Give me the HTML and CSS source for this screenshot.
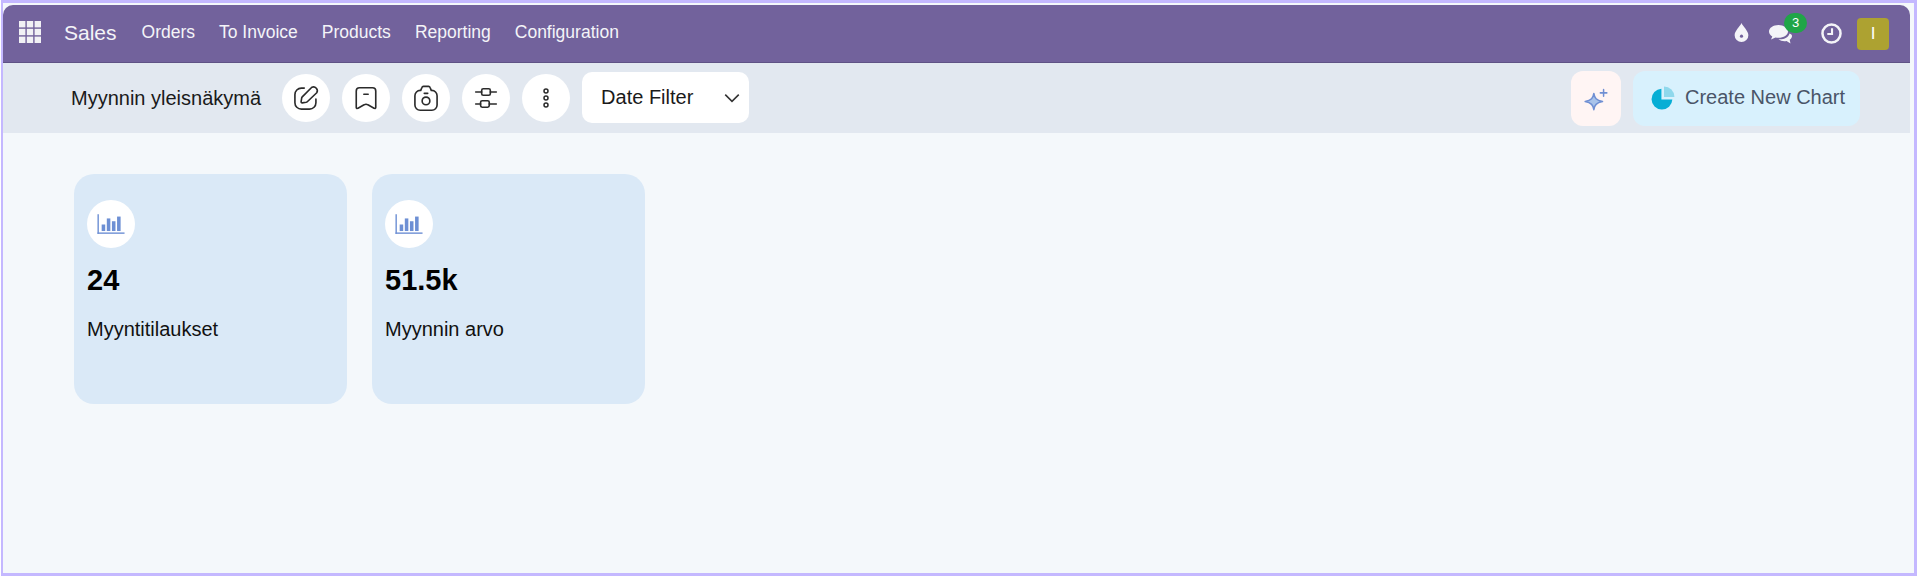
FILE: index.html
```html
<!DOCTYPE html>
<html lang="en">
<head>
  <meta charset="UTF-8">
  <title>Sales</title>
  <link rel="stylesheet" href="styles.css">
</head>
<body>
  <div class="frame">
    <!-- Top menu -->
    <nav class="navbar">
      <svg class="apps-icon" viewBox="0 0 22 22" width="22" height="22" fill="#f1f1f5">
        <rect x="0" y="0" width="6.4" height="6.4"/><rect x="7.8" y="0" width="6.4" height="6.4"/><rect x="15.6" y="0" width="6.4" height="6.4"/>
        <rect x="0" y="7.8" width="6.4" height="6.4"/><rect x="7.8" y="7.8" width="6.4" height="6.4"/><rect x="15.6" y="7.8" width="6.4" height="6.4"/>
        <rect x="0" y="15.6" width="6.4" height="6.4"/><rect x="7.8" y="15.6" width="6.4" height="6.4"/><rect x="15.6" y="15.6" width="6.4" height="6.4"/>
      </svg>
      <span class="brand">Sales</span>
      <a class="nav-link">Orders</a>
      <a class="nav-link">To Invoice</a>
      <a class="nav-link">Products</a>
      <a class="nav-link">Reporting</a>
      <a class="nav-link">Configuration</a>
      <div class="nav-right">
        <svg class="drop-icon" viewBox="0 0 14 18" width="15" height="19">
          <path d="M7 0C5.500 3.500 0.500 7.500 0.500 11.500a6.500 6.500 0 0 0 13 0C13.500 7.500 8.500 3.500 7 0Z" fill="#f4f4f8"/>
          <circle cx="7" cy="12.500" r="1.500" fill="#72629c"/>
        </svg>
        <div class="chat">
          <svg viewBox="0 0 24 20" width="24" height="20" fill="#f4f4f8">
            <path d="M9.500 0C4.300 0 0 2.900 0 6.500c0 2 1.300 3.800 3.300 5L2 14.500l4.500-2.100c1 .3 2 .4 3 .4 5.200 0 9.500-2.800 9.500-6.300S14.700 0 9.500 0Z"/>
            <path d="M20.500 8.500c-1 3.800-5.500 6.300-11 5.800 1.500 1.300 3.800 2 6 2 .7 0 1.400-.1 2-.2l4 2.400-.8-3.700c1.500-1 2.300-2.300 2.300-3.800 0-1-.9-2-2.500-2.500Z"/>
          </svg>
          <span class="badge">3</span>
        </div>
        <svg class="clock-icon" viewBox="0 0 20 20" width="21" height="21" fill="none" stroke="#f4f4f8">
          <circle cx="10" cy="10" r="8.600" stroke-width="2.400"/>
          <path d="M10.500 5v5.500H6" stroke-width="2"/>
        </svg>
        <div class="avatar">I</div>
      </div>
    </nav>

    <!-- Toolbar -->
    <div class="toolbar">
      <span class="page-title">Myynnin yleisnäkymä</span>
      <div class="tool-buttons">
        <button class="round-btn">
          <svg viewBox="0 0 24 24" width="28" height="28" fill="none" stroke="#2b2b2b" stroke-width="1.400" stroke-linecap="round" stroke-linejoin="round">
            <path d="M10.500 3.500H8A5.500 5.500 0 0 0 2.500 9v7A5.500 5.500 0 0 0 8 21.500h7a5.500 5.500 0 0 0 5.500-5.500v-3"/>
            <path d="M17 2.800 8.800 11a2 2 0 0 0-.5 1l-.5 3.300c0 .6.400 1 1 .9l3.300-.5a2 2 0 0 0 1-.5L21.200 7.500a3.300 3.300 0 0 0-4.200-4.700Z"/>
          </svg>
        </button>
        <button class="round-btn">
          <svg viewBox="0 0 24 24" width="26" height="26" fill="none" stroke="#2b2b2b" stroke-width="1.500" stroke-linecap="round" stroke-linejoin="round">
            <path d="M6 2.500h12a3 3 0 0 1 3 3v15.200c0 .9-.9 1.200-1.600.7l-5.600-3.100a3.500 3.500 0 0 0-3.600 0l-5.600 3.100c-.7.500-1.600.2-1.600-.7V5.500a3 3 0 0 1 3-3Z"/>
            <path d="M10 8.500h4"/>
          </svg>
        </button>
        <button class="round-btn">
          <svg viewBox="0 0 24 24" width="28" height="28" fill="none" stroke="#2b2b2b" stroke-width="1.400" stroke-linecap="round" stroke-linejoin="round">
            <path d="M7.500 5.500 8.500 3c.2-.6.700-1 1.300-1h4.400c.6 0 1.100.4 1.300 1l1 2.500h.5a4.500 4.500 0 0 1 4.500 4.500v8a4.500 4.500 0 0 1-4.500 4.500H7A4.500 4.500 0 0 1 2.500 18v-8A4.500 4.500 0 0 1 7 5.500Z"/>
            <circle cx="12" cy="14.500" r="3.300"/>
            <path d="M10.500 8h3"/>
          </svg>
        </button>
        <button class="round-btn">
          <svg viewBox="0 0 24 24" width="26" height="26" fill="none" stroke="#2b2b2b" stroke-width="1.500" stroke-linecap="round" stroke-linejoin="round">
            <rect x="8" y="3.500" width="8" height="6" rx="1.500"/>
            <rect x="7" y="14.500" width="8" height="6" rx="1.500"/>
            <path d="M2.500 6.500H8M16 6.500h5.500M2.500 17.500H7M15 17.500h6.500"/>
          </svg>
        </button>
        <button class="round-btn">
          <svg viewBox="0 0 24 24" width="24" height="24" fill="none" stroke="#2b2b2b" stroke-width="1.500">
            <circle cx="12" cy="5" r="2"/><circle cx="12" cy="12" r="2"/><circle cx="12" cy="19" r="2"/>
          </svg>
        </button>
      </div>
      <div class="date-filter">
        <span>Date Filter</span>
        <svg viewBox="0 0 16 16" width="18" height="18" fill="none" stroke="#333" stroke-width="1.400"><path d="M2 5l6 6 6-6"/></svg>
      </div>
      <div class="toolbar-right">
        <button class="ai-btn">
          <svg viewBox="0 0 24 24" width="26" height="26" stroke="#6f8fd3" stroke-width="1.400" stroke-linejoin="round" stroke-linecap="round">
            <path d="M10 5c.6 4.200 2.300 6.300 8 7.500-5.700 1.200-7.400 3.300-8 7.500-.6-4.200-2.300-6.300-8-7.500C7.700 11.300 9.400 9.200 10 5Z" fill="#a9c3ea"/>
            <path d="M19 1.500v6M16 4.500h6" fill="none"/>
          </svg>
        </button>
        <button class="chart-btn">
          <svg viewBox="0 0 24 24" width="25" height="25">
            <path d="M10 3.500a10 10 0 1 0 10.500 10.500H10Z" fill="#06aed5"/>
            <path d="M12.500 1.500a10 10 0 0 1 10 10h-10Z" fill="#8fd8ec"/>
          </svg>
          <span>Create New Chart</span>
        </button>
      </div>
    </div>

    <!-- Kortit -->
    <main class="content">
      <div class="stat-card">
        <div class="stat-icon">
          <svg viewBox="0 0 30 24" width="28" height="23" fill="#6d8fd4">
            <rect x="0.500" y="1" width="1.500" height="21"/><rect x="0.500" y="20.500" width="29" height="1.500"/>
            <rect x="5" y="12" width="3.800" height="7"/><rect x="10.500" y="5.500" width="3.800" height="13.500"/><rect x="16" y="8.500" width="3.800" height="10.500"/><rect x="21.500" y="3.500" width="3.800" height="15.500"/>
          </svg>
        </div>
        <div class="stat-value">24</div>
        <div class="stat-label">Myyntitilaukset</div>
      </div>
      <div class="stat-card">
        <div class="stat-icon">
          <svg viewBox="0 0 30 24" width="28" height="23" fill="#6d8fd4">
            <rect x="0.500" y="1" width="1.500" height="21"/><rect x="0.500" y="20.500" width="29" height="1.500"/>
            <rect x="5" y="12" width="3.800" height="7"/><rect x="10.500" y="5.500" width="3.800" height="13.500"/><rect x="16" y="8.500" width="3.800" height="10.500"/><rect x="21.500" y="3.500" width="3.800" height="15.500"/>
          </svg>
        </div>
        <div class="stat-value">51.5k</div>
        <div class="stat-label">Myynnin arvo</div>
      </div>
    </main>
  </div>
</body>
</html>
```

FILE: styles.css
```css
* {
  box-sizing: border-box;
}

html,
body {
  height: 100%;
}

body {
  margin: 0;
  background: #fff;
  font-family: 'Liberation Sans', Arial, sans-serif;
  overflow: hidden;
}

.frame {
  display: flex;
  flex-direction: column;
  height: 576px;
  margin-left: 1px;
  padding: 2px 4px 0 0;
  border: 3px solid #c4b8ff;
  border-left-width: 2px;
  background: #f4f8fb;
}

.navbar {
  display: flex;
  align-items: center;
  flex: 0 0 58px;
  padding: 0 21px 0 16px;
  background: #72629c;
  border-top-left-radius: 10px;
  border-top-right-radius: 10px;
  border-bottom: 1px solid #5f5285;
  color: #f4f4f8;
}

.apps-icon {
  margin-right: 23px;
  margin-top: -3px;
}

.brand {
  font-size: 21px;
  margin-right: 25px;
  margin-top: -2px;
}

.nav-link {
  font-size: 17.5px;
  margin-right: 24px;
  margin-top: -2px;
}

.nav-right {
  display: flex;
  align-items: center;
  margin-left: auto;
}

.drop-icon {
  margin-right: 21px;
  margin-top: -2px;
}

.chat {
  position: relative;
  display: flex;
  margin-right: 28px;
  margin-left: -1px;
  margin-top: 3px;
}

.badge {
  position: absolute;
  top: -12px;
  left: 15px;
  width: 23px;
  height: 20px;
  border-radius: 10px;
  background: #20a548;
  color: #fff;
  font-size: 13px;
  line-height: 20px;
  text-align: center;
}

.clock-icon {
  margin-right: 15px;
}

.avatar {
  width: 32px;
  height: 32px;
  border-radius: 4px;
  background: #ada231;
  color: #fff;
  font-size: 17px;
  line-height: 32px;
  text-align: center;
}

.toolbar {
  display: flex;
  align-items: center;
  flex: 0 0 70px;
  padding: 0 50px 0 68px;
  background: #e2e8f0;
}

.page-title {
  font-size: 20px;
  color: #1a1a1a;
  margin-right: 21px;
}

.tool-buttons {
  display: flex;
  gap: 12px;
}

.round-btn {
  display: flex;
  align-items: center;
  justify-content: center;
  width: 48px;
  height: 48px;
  padding: 0;
  border: none;
  border-radius: 50%;
  background: #fff;
}

.date-filter {
  display: flex;
  align-items: center;
  justify-content: space-between;
  width: 167px;
  height: 51px;
  margin-left: 12px;
  margin-top: -1px;
  padding: 0 8px 0 19px;
  border-radius: 10px;
  background: #fff;
  font-size: 20px;
  color: #1a1a1a;
}

.toolbar-right {
  display: flex;
  gap: 12px;
  margin-left: auto;
}

.ai-btn {
  display: flex;
  align-items: center;
  justify-content: center;
  width: 50px;
  height: 55px;
  padding: 5px 0 0;
  border: none;
  border-radius: 12px;
  background: #fff5f4;
}

.chart-btn {
  display: flex;
  align-items: center;
  gap: 9px;
  width: 227px;
  height: 55px;
  padding: 0 0 2px 18px;
  border: none;
  border-radius: 12px;
  background: #d8f1fd;
  color: #4a5568;
  font-family: inherit;
  font-size: 20px;
}

.content {
  display: flex;
  align-items: flex-start;
  gap: 25px;
  flex: 1;
  padding: 41px 0 0 71px;
}

.stat-card {
  width: 273px;
  height: 230px;
  padding: 26px 13px;
  border-radius: 20px;
  background: #dae9f7;
}

.stat-icon {
  display: flex;
  align-items: center;
  justify-content: center;
  width: 48px;
  height: 48px;
  border-radius: 50%;
  background: #fff;
}

.stat-value {
  margin-top: 17px;
  font-size: 29px;
  font-weight: bold;
  line-height: 30px;
  color: #000;
}

.stat-label {
  margin-top: 23px;
  font-size: 20px;
  line-height: 22px;
  color: #111;
}
```
